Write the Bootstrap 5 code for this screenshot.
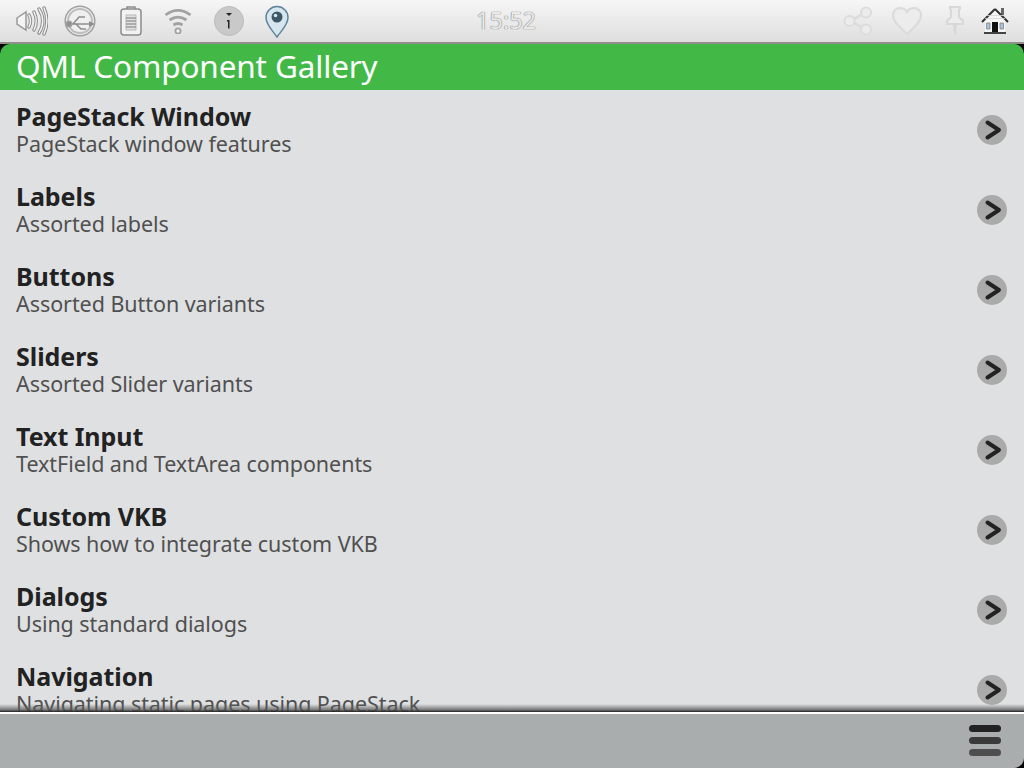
<!DOCTYPE html>
<html lang="en">
<head>
    <meta charset="UTF-8">
    <meta name="viewport" content="width=device-width, initial-scale=1.0">
    <link href="https://cdn.jsdelivr.net/npm/bootstrap@5.3.3/dist/css/bootstrap.min.css" rel="stylesheet">
    <title>QML Component Gallery</title>
    <style>
        html, body {
            height: 768px;
            overflow: hidden;
            background-color: #000;
            font-family: "Noto Sans", "Open Sans", sans-serif;
        }
        .app-shell {
            height: 768px;
            width: 1024px;
        }
        .status-bar {
            height: 44px;
            padding-left: 16px;
            padding-right: 15px;
            background: linear-gradient(#f6f6f6, #e8e8e8 60%, #dedede);
            border-bottom: 2px solid #8f8f8c;
        }
        .usb-icon { margin-left: 16px; }
        .battery-icon { margin-left: 24px; }
        .wifi-icon { margin-left: 22px; }
        .info-icon { margin-left: 22px; }
        .pin-icon { margin-left: 21px; }
        .heart-icon { margin-left: 19px; }
        .tack-icon { margin-left: 24px; }
        .home-icon { margin-left: 17px; }
        .status-clock {
            margin-left: 187px;
            font-size: 23.5px;
            line-height: 1;
            color: #e9e9e9;
            text-shadow: 0 0 1px #777, 0 0 1px #777;
        }
        .page-title {
            height: 46px;
            padding-left: 16px;
            background-color: #42b947;
            color: #fff;
            font-size: 31.5px;
            letter-spacing: -.15px;
            line-height: 44px;
            border-radius: 10px 10px 0 0;
        }
        .page-list {
            background-color: #dfe0e2;
            overflow: hidden;
            min-height: 0;
        }
        .page-row {
            height: 80px;
            flex-shrink: 0;
            padding-left: 16px;
            padding-right: 17px;
        }
        .row-text {
            padding-bottom: 2px;
        }
        .row-title {
            font-size: 25px;
            font-weight: 700;
            letter-spacing: -.05px;
            line-height: 29px;
            color: #222;
        }
        .row-sub {
            font-size: 21.5px;
            letter-spacing: -.06px;
            line-height: 26px;
            color: #505050;
        }
        .bottom-fade {
            height: 8px;
            margin-top: -8px;
            position: relative;
            background: linear-gradient(rgba(223,224,226,0), rgba(90,90,90,.75) 70%, #222);
        }
        .tool-bar {
            height: 56px;
            padding-right: 23px;
            background-color: #a9adae;
            border-top: 2px solid #fff;
            border-radius: 0 0 10px 0;
        }
    </style>
</head>
<body>
    <div class="app-shell d-flex flex-column">
        <div class="status-bar d-flex align-items-center flex-shrink-0">
            <svg width="32" height="32" viewBox="0 0 32 32" fill="none">
                <path d="M1 13l9-6v18l-9-6z" fill="#f4f4f4" stroke="#999" stroke-width="1.500"/>
                <path d="M13 10c2 4 2 8 0 12M18 7c3 6 3 12 0 18M23 4c5 8 5 16 0 24M28 3c4 9 4 17 0 26" stroke="#8f8f8f" stroke-width="3.400" stroke-linecap="round"/>
                <path d="M13 10c2 4 2 8 0 12M18 7c3 6 3 12 0 18M23 4c5 8 5 16 0 24M28 3c4 9 4 17 0 26" stroke="#f4f4f4" stroke-width="1.400" stroke-linecap="round"/>
            </svg>
            <svg class="usb-icon" width="32" height="32" viewBox="0 0 32 32" fill="none" stroke="#a0a0a0" stroke-width="1.500">
                <circle cx="16" cy="16" r="14.800" fill="#efefef"/>
                <circle cx="16" cy="16" r="12" stroke="#bdbdbd" stroke-width="2"/>
                <path d="M4 19h23M9 19l6-7h6M12 19l5 5h5" stroke="#8f8f8f" stroke-width="1.600"/>
                <circle cx="5" cy="19" r="2.800" fill="#8f8f8f"/>
                <path d="M25 16l6 3-6 3z" fill="#8f8f8f" stroke="none"/>
            </svg>
            <svg class="battery-icon" width="22" height="30" viewBox="0 0 22 30" fill="none" stroke="#8c8c8c" stroke-width="1.500">
                <rect x="1" y="3" width="20" height="26" rx="3" fill="#f2f2f2"/>
                <path d="M7 3V1h8v2"/>
                <path d="M6 9h10v15H6z" fill="#e2e2e2" stroke="#b5b5b5" stroke-width="1"/>
                <path d="M6 12h10M6 15h10M6 18h10M6 21h10" stroke-width="1.500" stroke="#9c9c9c"/>
            </svg>
            <svg class="wifi-icon" width="28" height="26" viewBox="0 0 28 26" fill="none" stroke="#a2a2a2" stroke-width="2.800">
                <path d="M1.500 7c8-6 17-6 25 0M5.500 12c6-4 11-4 17 0M9.500 17c3-2 6-2 9 0"/>
                <circle cx="14" cy="23" r="2.600" fill="#f2f2f2" stroke-width="1.800"/>
            </svg>
            <svg class="info-icon" width="30" height="30" viewBox="0 0 30 30">
                <circle cx="15" cy="15" r="14.500" fill="#c9c9c9" stroke="#bbb"/>
                <path d="M12 7h6l-3 3z" fill="#222"/>
                <path d="M13 14h2.500v8.500H14V15.500h-1z" fill="#222"/>
            </svg>
            <svg class="pin-icon" width="24" height="33" viewBox="0 0 24 33">
                <path d="M12 32C8 26 1 20 1 12.500a11 11 0 0 1 22 0C23 20 16 26 12 32z" fill="#d7e6ee" stroke="#5e8499" stroke-width="1.500"/>
                <circle cx="12" cy="12" r="5.500" fill="#3d5766"/>
                <circle cx="10.500" cy="10.500" r="1.800" fill="#dbe6ec"/>
            </svg>
            <div class="status-clock">15:52</div>
            <div class="ms-auto d-flex align-items-center">
                <svg width="30" height="30" viewBox="0 0 30 30" fill="none" stroke="#dcdcdc" stroke-width="2">
                    <path d="M7 15l15-8M7 15l15 8" stroke-width="3"/>
                    <circle cx="6.500" cy="15" r="5" fill="#ececec"/>
                    <circle cx="23" cy="6.500" r="5" fill="#ececec"/>
                    <circle cx="23" cy="23.500" r="5" fill="#ececec"/>
                </svg>
                <svg class="heart-icon" width="30" height="30" viewBox="0 0 30 30" fill="#ececec" stroke="#dadada" stroke-width="2">
                    <path d="M15 28C9 22 1 16 1 9c0-4 3-7 7-7 3 0 6 2 7 4 1-2 4-4 7-4 4 0 7 3 7 7 0 7-8 13-14 19z"/>
                </svg>
                <svg class="tack-icon" width="18" height="30" viewBox="0 0 18 30" fill="#ececec" stroke="#d8d8d8" stroke-width="2">
                    <path d="M4 1h10v2l-1 1v7l4 4v3H1v-3l4-4V4L4 3zM8 18h2l-1 11z"/>
                </svg>
                <svg class="home-icon" width="28" height="28" viewBox="0 0 28 28">
                    <path d="M20 1h3v7h-3z" fill="#666"/>
                    <path d="M14 2L2 14h2v12h20V14h2z" fill="#f6f6f6"/>
                    <path d="M14 2L1 15M14 2l13 13" stroke="#333" stroke-width="2" fill="none"/>
                    <path d="M6 8.500h16M4 11.500h20" stroke="#d5d5d5" stroke-width=".8"/>
                    <path d="M11 15h6v10h-6z" fill="#111"/>
                    <path d="M5.500 16h3.500v6H5.500zM19 16h3.500v6H19z" fill="#a9c4de" stroke="#777" stroke-width=".7"/>
                    <path d="M3 26h22" stroke="#444" stroke-width="2"/>
                </svg>
            </div>
        </div>

        <div class="page-title flex-shrink-0">QML Component Gallery</div>

        <div id="pageList" class="page-list flex-grow-1 d-flex flex-column"></div>
        <div class="bottom-fade flex-shrink-0"></div>

        <div class="tool-bar d-flex align-items-center justify-content-end flex-shrink-0">
            <svg width="32" height="32" viewBox="0 0 32 32">
                <rect y="0" width="32" height="7" rx="3.500" fill="#222"/>
                <rect y="12" width="32" height="7" rx="3.500" fill="#3a3a3a"/>
                <rect y="24" width="32" height="7" rx="3.500" fill="#4e4e4e"/>
            </svg>
        </div>
    </div>

    <script>
        var pages = [
            ["PageStack Window", "PageStack window features"],
            ["Labels", "Assorted labels"],
            ["Buttons", "Assorted Button variants"],
            ["Sliders", "Assorted Slider variants"],
            ["Text Input", "TextField and TextArea components"],
            ["Custom VKB", "Shows how to integrate custom VKB"],
            ["Dialogs", "Using standard dialogs"],
            ["Navigation", "Navigating static pages using PageStack"]
        ];
        var pageList = document.getElementById("pageList");
        pages.forEach(function (page) {
            var row = document.createElement("div");
            row.className = "page-row d-flex align-items-center justify-content-between";
            row.innerHTML = `
                <div class="row-text">
                    <div class="row-title">${page[0]}</div>
                    <div class="row-sub">${page[1]}</div>
                </div>
                <svg width="30" height="30" viewBox="0 0 30 30">
                    <circle cx="15" cy="15" r="15" fill="#aaaaaa"/>
                    <path d="M10.500 7.500L22 15 10.500 22.500" fill="none" stroke="#222" stroke-width="4" stroke-linecap="round" stroke-linejoin="round"/>
                </svg>
            `;
            pageList.appendChild(row);
        });
    </script>
</body>
</html>
